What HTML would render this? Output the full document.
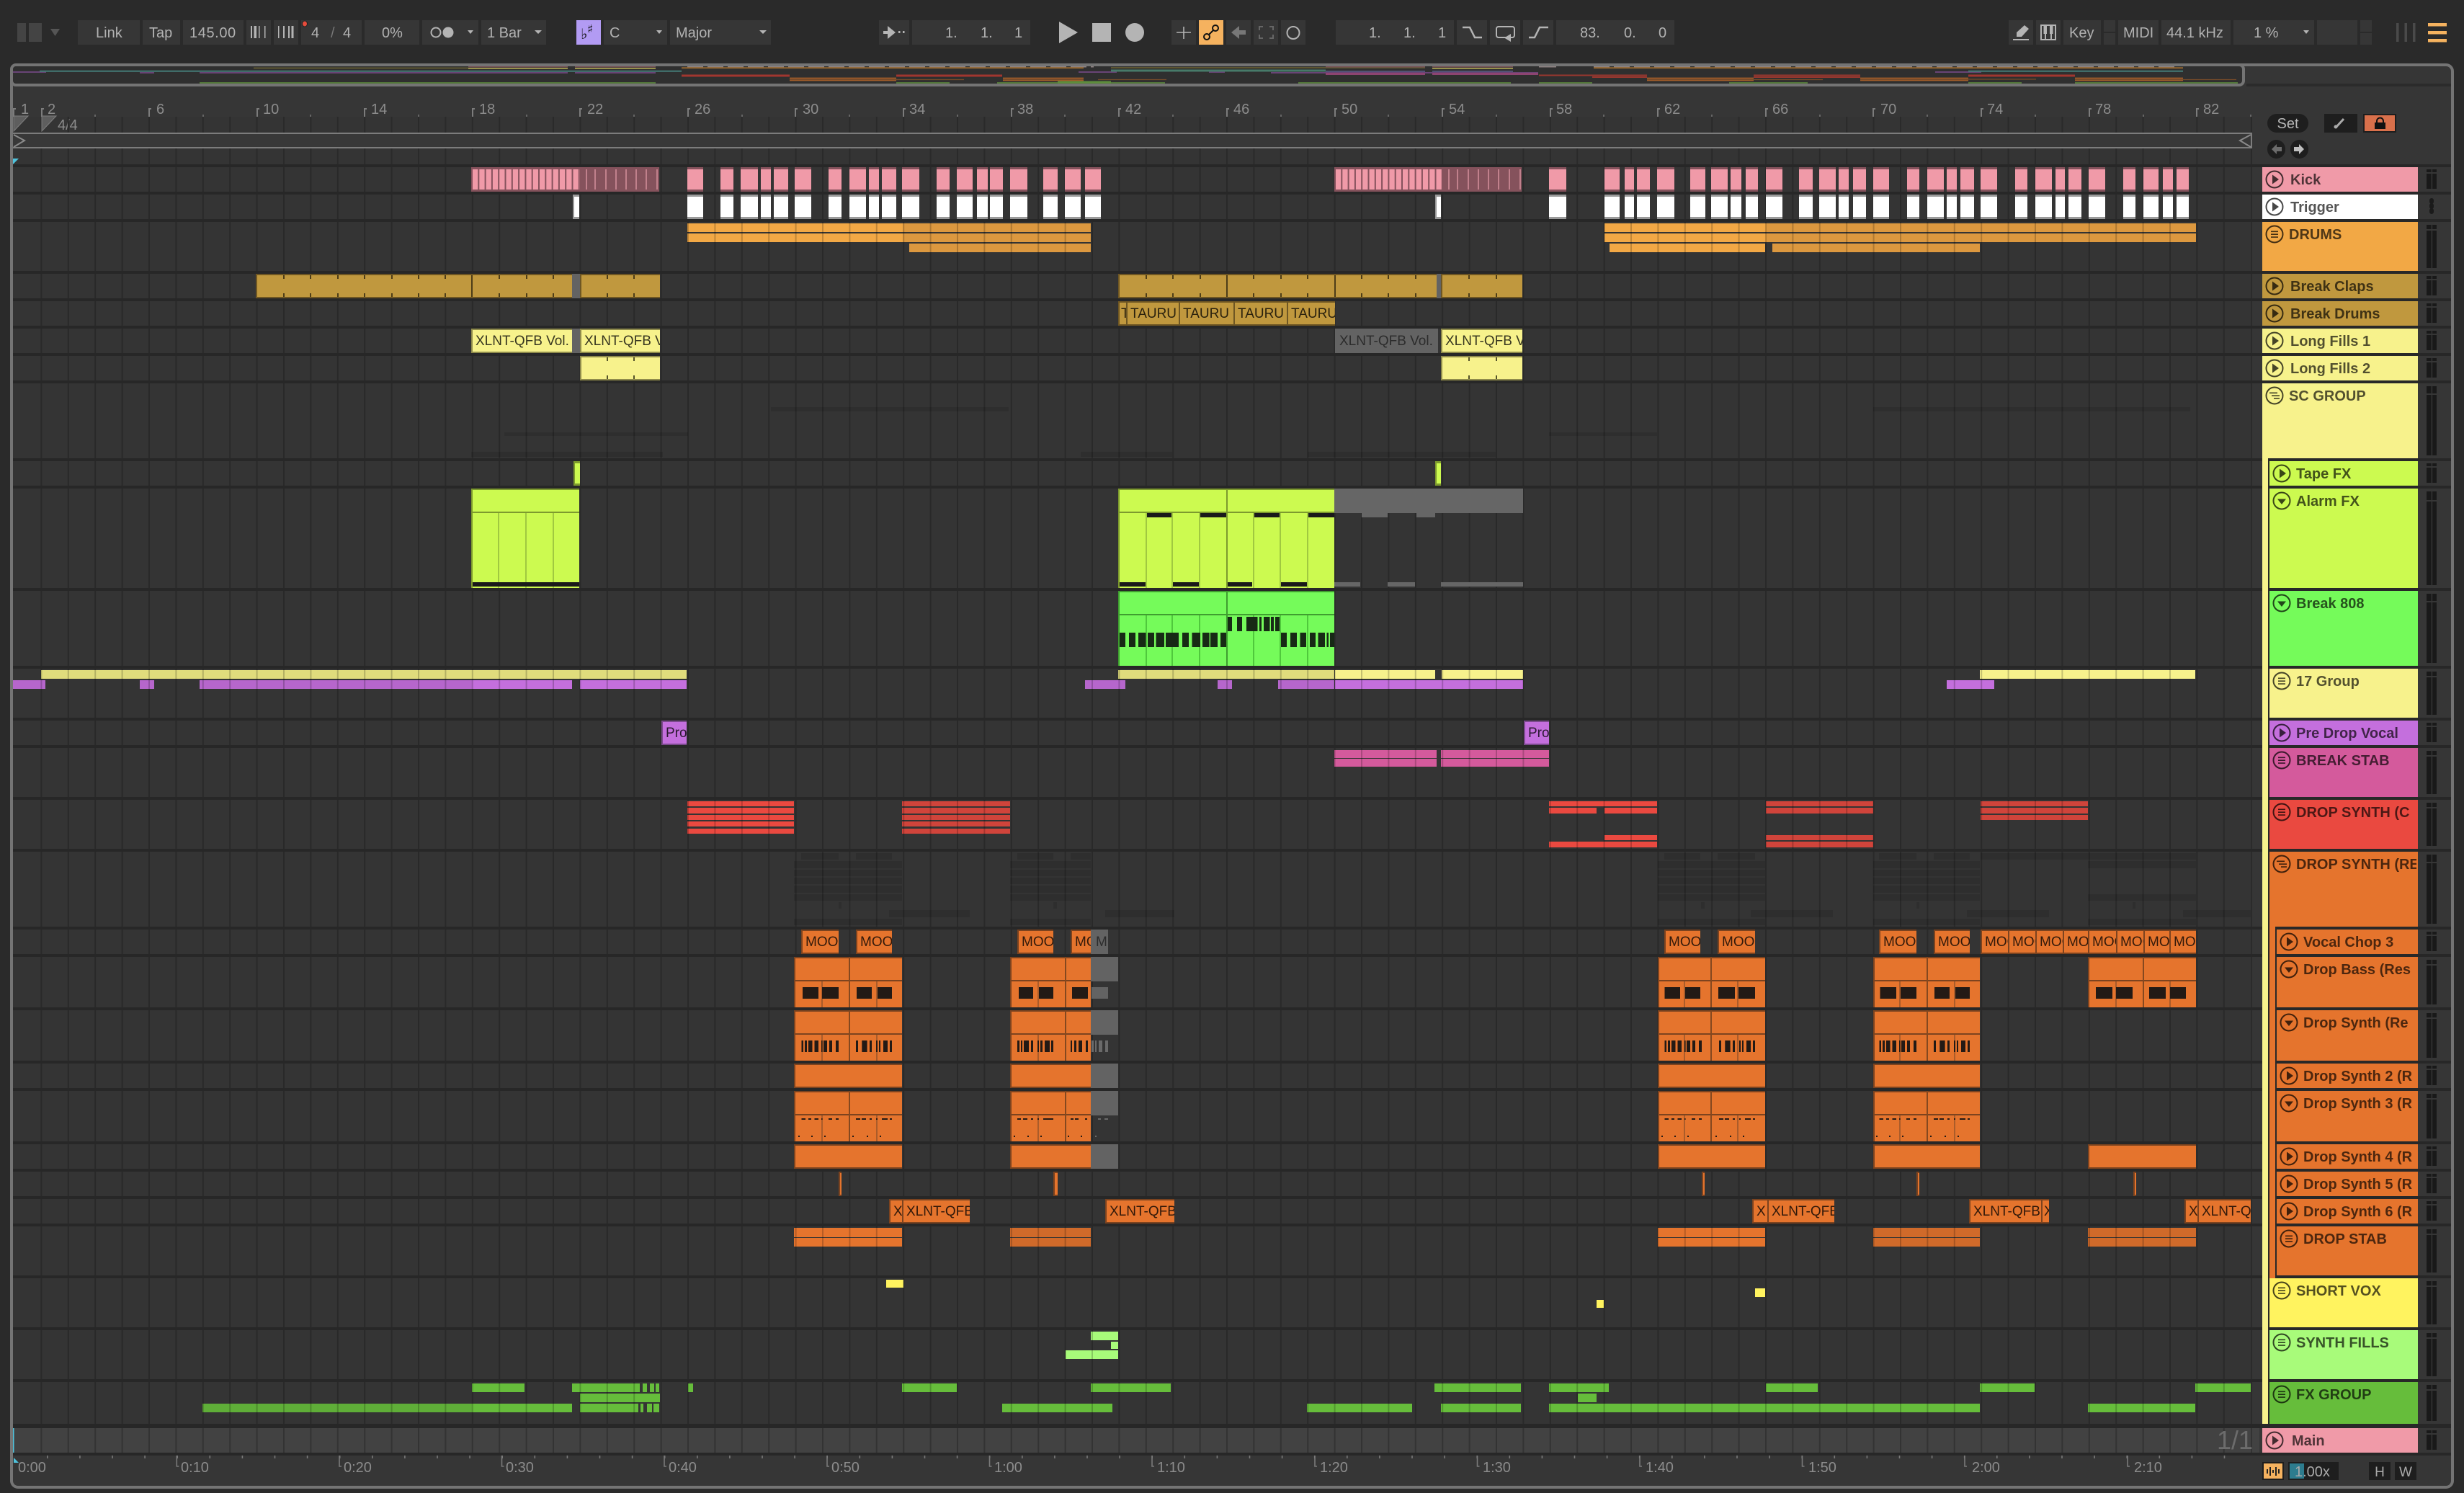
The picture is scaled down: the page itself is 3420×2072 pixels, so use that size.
<!DOCTYPE html>
<html lang="en"><head><meta charset="utf-8"><title>Arrangement</title>
<style>
html,body{margin:0;padding:0;background:#2a2a2a}
body{width:3420px;height:2072px;position:relative;overflow:hidden;font-family:"Liberation Sans",sans-serif}
svg{position:absolute;left:0;top:0}
text{font-family:"Liberation Sans",sans-serif}
.tb text{font-size:20px;fill:#b2b2b2}
.r text{font-size:20px;fill:#8c8c8c}
.st text{font-size:20px;font-weight:bold;fill:#000;fill-opacity:.67}
.c{position:absolute;box-sizing:border-box;height:34px;line-height:31px;font-size:19px;overflow:hidden;white-space:nowrap;padding-left:4px;border:2px solid;border-right:0;color:rgba(0,0,0,.78)}
.o{background:#e5742d;border-color:#7c431f}
.y{background:#f7f28c;border-color:#8f8b4c}
.a{background:#c0983e;border-color:#6e5623}
.p{background:#c46fdd;border-color:#7b4a8c}
.g{background:#636363;border-color:#636363;color:#2c2c2c}
</style></head><body>
<svg width="3420" height="2072" viewBox="0 0 3420 2072" xmlns="http://www.w3.org/2000/svg">
<defs>
<path id="L" d="M57.4 0V1M94.8 0V1M132.2 0V1M169.6 0V1M207 0V1M244.4 0V1M281.8 0V1M319.2 0V1M356.6 0V1M394 0V1M431.4 0V1M468.8 0V1M506.2 0V1M543.6 0V1M581 0V1M618.4 0V1M655.8 0V1M693.2 0V1M730.6 0V1M768 0V1M805.4 0V1M842.8 0V1M880.2 0V1M917.6 0V1M955 0V1M992.4 0V1M1029.8 0V1M1067.2 0V1M1104.6 0V1M1142 0V1M1179.4 0V1M1216.8 0V1M1254.2 0V1M1291.6 0V1M1329 0V1M1366.4 0V1M1403.8 0V1M1441.2 0V1M1478.6 0V1M1516 0V1M1553.4 0V1M1590.8 0V1M1628.2 0V1M1665.6 0V1M1703 0V1M1740.4 0V1M1777.8 0V1M1815.2 0V1M1852.6 0V1M1890 0V1M1927.4 0V1M1964.8 0V1M2002.2 0V1M2039.6 0V1M2077 0V1M2114.4 0V1M2151.8 0V1M2189.2 0V1M2226.6 0V1M2264 0V1M2301.4 0V1M2338.8 0V1M2376.2 0V1M2413.6 0V1M2451 0V1M2488.4 0V1M2525.8 0V1M2563.2 0V1M2600.6 0V1M2638 0V1M2675.4 0V1M2712.8 0V1M2750.2 0V1M2787.6 0V1M2825 0V1M2862.4 0V1M2899.8 0V1M2937.2 0V1M2974.6 0V1M3012 0V1M3049.4 0V1M3086.8 0V1M3125 0V1" stroke-width="2" fill="none"/>
<path id="B" d="M954 0H976V1H954zM1000 0H1018V1H1000zM1028 0H1052V1H1028zM1056 0H1070V1H1056zM1074 0H1094V1H1074zM1103 0H1126V1H1103zM1150 0H1168V1H1150zM1179 0H1202V1H1179zM1206 0H1220V1H1206zM1224 0H1244V1H1224zM1252 0H1276V1H1252zM1300 0H1318V1H1300zM1328 0H1350V1H1328zM1356 0H1371V1H1356zM1374 0H1392V1H1374zM1402 0H1426V1H1402zM1448 0H1468V1H1448zM1478 0H1500V1H1478zM1506 0H1528V1H1506zM2150 0H2174V1H2150zM2227 0H2248V1H2227zM2255 0H2268V1H2255zM2272 0H2290V1H2272zM2300 0H2324V1H2300zM2346 0H2367V1H2346zM2375 0H2398V1H2375zM2402 0H2417V1H2402zM2423 0H2440V1H2423zM2451 0H2474V1H2451zM2497 0H2516V1H2497zM2525 0H2548V1H2525zM2552 0H2566V1H2552zM2572 0H2590V1H2572zM2600 0H2622V1H2600zM2647 0H2664V1H2647zM2675 0H2698V1H2675zM2702 0H2716V1H2702zM2721 0H2740V1H2721zM2749 0H2772V1H2749zM2797 0H2814V1H2797zM2825 0H2848V1H2825zM2853 0H2866V1H2853zM2871 0H2889V1H2871zM2899 0H2922V1H2899zM2947 0H2964V1H2947zM2975 0H2996V1H2975zM3002 0H3016V1H3002zM3021 0H3038V1H3021z"/>
<path id="x" d="M1102 0h150v1h-150zM1402 0h112v1h-112zM2301 0h149v1h-149zM2600 0h148v1h-148z"/>
<path id="xi" d="M1104 0h148v1h-148zM1404 0h110v1h-110zM2303 0h147v1h-147zM2602 0h146v1h-146z"/>
<path id="v1" d="M1141 0v36M1217 0v36M1441 0v36M2338 0v36M2412 0v36M2637 0v36M2713 0v36" fill="none" stroke="#aa5c2a" stroke-width="2"/>
<path id="v2" d="M1179 -34v70M1479 -34v70M2375 -34v70M2675 -34v70" fill="none" stroke="#84481f" stroke-width="2"/>
<path id="bc" d="M1112.5 0h2.5v16h-2.5zM1117 0h3v16h-3zM1122 0h5.5v16h-5.5zM1130.5 0h5.5v16h-5.5zM1140 0h1.6v16h-1.6zM1143 0h5v16h-5zM1151 0h4v16h-4zM1160 0h4v16h-4zM1188 0h3v16h-3zM1196.3 0h7.3v16h-7.3zM1207 0h3v16h-3zM1216 0h2v16h-2zM1220 0h2v16h-2zM1226 0h6v16h-6zM1235 0h3v16h-3z"/>
<path id="ds" d="M1112.5 0h5.5v2h-5.5zM1122 0h4v2h-4zM1130.5 0h5.5v2h-5.5zM1140 0h1.6v2h-1.6zM1150 0h5v2h-5zM1160 0h4v2h-4zM1188 0h6v2h-6zM1196 0h6v2h-6zM1207 0h3v2h-3zM1216 0h2v2h-2zM1224 0h8v2h-8zM1235 0h3v2h-3zM1108 24h2v2h-2zM1126 24h2v2h-2zM1144 24h2v2h-2zM1183 24h2v2h-2zM1203 24h2v2h-2zM1221 24h2v2h-2z"/>
<g id="ip"><circle cx="13" cy="12" r="11.5" fill="none" stroke="#000" stroke-opacity=".72" stroke-width="2"/><path d="M10 5.5L19 12L10 18.5z"/></g>
<g id="im"><circle cx="13" cy="12" r="11.5" fill="none" stroke="#000" stroke-opacity=".72" stroke-width="2"/><path d="M8 7.5h10v1.6H8zM8 11.4h10v1.6H8zM8 15.3h10v1.6H8z"/></g>
<g id="if"><circle cx="13" cy="12" r="11.5" fill="none" stroke="#000" stroke-opacity=".72" stroke-width="2"/><path d="M6 7.5h11v1.6H6zM9 11.4h11v1.6H9zM12 15.3h8v1.6h-8z"/></g>
<g id="id"><circle cx="13" cy="12" r="11.5" fill="none" stroke="#000" stroke-opacity=".72" stroke-width="2"/><path d="M7 9.5H19L13 17z"/></g>
<clipPath id="stc"><rect x="3140" y="232" width="214" height="1790"/></clipPath>
</defs>

<!-- panel -->
<rect x="16" y="90" width="3388" height="1974" rx="9" fill="#363636" stroke="#747474" stroke-width="4"/>
<rect x="3118" y="116" width="284" height="4" fill="#2b2b2b"/>
<rect x="16" y="90" width="3098" height="28" rx="6" fill="#2f2f2f" stroke="#747474" stroke-width="4"/>

<!-- overview -->
<g fill="none" opacity=".78">
<path stroke="#7a4a8a" stroke-width="2" d="M18 100H64M194 101H214M277 101H788M798 101H910M1497 100H1550M1678 100H1700M1764 101H2135M2686 100H2750"/>
<path stroke="#4a8f8a" stroke-width="2" d="M55 98.7H946M2732 98.7H3030"/>
<path stroke="#4e8f7a" stroke-width="3" d="M1542 98H1840"/>
<path stroke="#6b6233" stroke-width="2" d="M352 94.5H650M1542 94H1840M1840 94H1978"/>
<path stroke="#b5ad55" stroke-width="2" d="M650 95H788M798 95H910M1988 95H2100"/>
<path stroke="#8a5a60" stroke-width="1.5" d="M650 92.8H788M798 92.8H910M1840 92.8H1978M1988 92.8H2100"/>
<path stroke="#a89a9a" stroke-width="1.5" stroke-dasharray="22 6" d="M954 92.7H1518M2212 92.7H3020"/>
<path stroke="#a89a9a" stroke-width="1.5" d="M2136 92.7H2160"/>
<path stroke="#b0762e" stroke-width="2" d="M946 94.2H1504M2212 94.2H3030"/>
<path stroke="#c0392f" stroke-width="3" d="M946 105H1096M1244 105H1391M2732 105H2880"/>
<path stroke="#b83a30" stroke-width="2" d="M2136 104.5H2286M2210 107H2286M2434 104.5H2582M2434 107H2582"/>
<path stroke="#c46a28" stroke-width="2" d="M1096 108.6H1244M1096 111.4H1244M1392 108.6H1504M1392 111.4H1504M2286 108.6H2434M2286 111.4H2434M2582 108.6H2732M2582 111.4H2732M2880 108.6H3030M2880 111.4H3030"/>
<path stroke="#8a5428" stroke-width="1.2" d="M1244 110.5H1338M1524 110.5H1619M2434 110.5H2530M2732 110H2826M3030 110.5H3104"/>
<path stroke="#5d8a3c" stroke-width="2" d="M277 115H910M1244 115H1318M1384 115H1617M1802 115H2097M2136 115H2210M2400 115H2509M2732 115H2806M2880 115H3106"/>
<path stroke="#6aa840" stroke-width="3" d="M1468 114H1542"/>
<path stroke="#a84a84" stroke-width="3" d="M1840 102.5H1978M1988 102.5H2135"/>
<path stroke="#6a6aa8" stroke-width="1.5" d="M1840 99H1978M1988 99H2100"/>
</g>

<!-- arrangement background -->
<rect x="18" y="162" width="3106" height="22" fill="#343434"/>
<rect x="18" y="206" width="3106" height="1770" fill="#343434"/>
<rect x="18" y="1982" width="3118" height="34" fill="#424242"/>

<!-- ruler ticks -->
<path fill="none" stroke="#7c7c7c" stroke-width="2" d="M19 162V151h3M58 162V151h3M207 162V151h3M357 162V151h3M506 162V151h3M656 162V151h3M805 162V151h3M955 162V151h3M1104 162V151h3M1254 162V151h3M1404 162V151h3M1553 162V151h3M1703 162V151h3M1853 162V151h3M2002 162V151h3M2152 162V151h3M2301 162V151h3M2451 162V151h3M2600 162V151h3M2750 162V151h3M2900 162V151h3M3049 162V151h3"/>
<path fill="none" stroke="#666" stroke-width="2" d="M132 159v3M282 159v3M431 159v3M581 159v3M731 159v3M880 159v3M1030 159v3M1179 159v3M1329 159v3M1478 159v3M1628 159v3M1778 159v3M1927 159v3M2077 159v3M2226 159v3M2376 159v3M2526 159v3M2675 159v3M2825 159v3M2975 159v3M3124 159v3"/>
<g class="r">
<text x="29" y="158">1</text><text x="66" y="158">2</text><text x="217" y="158">6</text><text x="365" y="158">10</text><text x="515" y="158">14</text><text x="665" y="158">18</text><text x="815" y="158">22</text><text x="964" y="158">26</text><text x="1114" y="158">30</text><text x="1262" y="158">34</text><text x="1412" y="158">38</text><text x="1562" y="158">42</text><text x="1712" y="158">46</text><text x="1862" y="158">50</text><text x="2011" y="158">54</text><text x="2160" y="158">58</text><text x="2310" y="158">62</text><text x="2460" y="158">66</text><text x="2610" y="158">70</text><text x="2758" y="158">74</text><text x="2908" y="158">78</text><text x="3058" y="158">82</text>
<text x="80" y="180">4/4</text>
</g>
<use href="#L" transform="translate(0,162) scale(1,22)" stroke="#2a2a2a"/>
<use href="#L" transform="translate(0,206) scale(1,22)" stroke="#2a2a2a"/>
<path d="M19 161H39L19 182zM58 161H78L58 182z" fill="#5e5e5e" stroke="#7e7e7e"/>
<!-- locator band -->
<rect x="18" y="186" width="3108" height="18" fill="#383838"/>
<path d="M18 185H3126M18 205H3126M3125 184V206" stroke="#7c7c7c" stroke-width="2" fill="none"/>
<path d="M19 187L34 195L19 204M3124 187L3109 195L3124 204" fill="none" stroke="#8a8a8a" stroke-width="2"/>
<path d="M18 220H26L18 228z" fill="#4fc3dd"/>

<!-- lane clips drawn under grid lines -->
<path fill="#f2a845" d="M954 310H1253V322H954zM954 324H1253V336H954zM2227 310H2451V322H2227zM2227 324H2451V336H2227zM2234 338H2450V350H2234z"/>
<path fill="#dc983f" d="M1253 310H1514V322H1253zM1253 324H1514V336H1253zM1262 338H1514V350H1262zM2451 310H3048V322H2451zM2451 324H3048V336H2451zM2460 338H2748V350H2460z"/>
<path fill="#e0dc7c" d="M1552 930H1852V942H1552zM57 930H953V942H57z"/>
<path fill="#f7f28c" d="M1853 930H1992V942H1853zM2001 930H2114V942H2001zM2748 930H3047V942H2748z"/>
<path fill="#b666cc" d="M18 944H63V956H18zM194 944H214V956H194zM277 944H655V956H277zM1506 944H1562V956H1506zM1690 944H1710V956H1690zM1774 944H1852V956H1774z"/>
<path fill="#c46fdd" d="M655 944H794V956H655zM805 944H953V956H805zM1853 944H2114V956H1853zM2702 944H2768V956H2702z"/>
<path fill="#d45a9c" d="M1852 1041H1994V1052H1852zM1852 1053H1994V1064H1852zM2000 1041H2150V1052H2000zM2000 1053H2150V1064H2000z"/>
<path fill="#ea4940" d="M954 1112H1102V1119H954zM954 1121H1102V1129H954zM954 1131H1102V1138H954zM954 1140H1102V1147H954zM954 1150H1102V1157H954zM2150 1112H2300V1119H2150zM2150 1121H2216V1129H2150zM2227 1121H2300V1129H2227zM2227 1159H2300V1166H2227zM2150 1168H2300V1176H2150z"/>
<path fill="#d0443b" d="M1252 1112H1402V1119H1252zM1252 1121H1402V1129H1252zM1252 1131H1402V1138H1252zM1252 1140H1402V1147H1252zM1252 1150H1402V1157H1252zM2451 1112H2600V1119H2451zM2451 1121H2600V1129H2451zM2451 1159H2600V1166H2451zM2451 1168H2600V1176H2451zM2749 1112H2898V1119H2749zM2749 1121H2898V1129H2749zM2749 1131H2898V1138H2749z"/>
<path fill="#e5742d" d="M1102 1704H1252V1717H1102zM1102 1718H1252V1730H1102zM2301 1704H2450V1717H2301zM2301 1718H2450V1730H2301z"/>
<path fill="#d06a2a" d="M1402 1704H1514V1717H1402zM1402 1718H1514V1730H1402zM2600 1704H2748V1717H2600zM2600 1718H2748V1730H2600zM2898 1704H3048V1717H2898zM2898 1718H3048V1730H2898z"/>
<path fill="#fff35f" d="M1230 1776H1254V1787H1230zM2216 1804H2226V1815H2216zM2436 1788H2450V1800H2436z"/>
<path fill="#a8fb7a" d="M1514 1848H1552V1860H1514zM1542 1862H1552V1872H1542zM1479 1874H1552V1886H1479z"/>
<path fill="#5fae38" d="M281 1948H655V1960H281z"/>
<path fill="#66bd3b" d="M655 1920H728V1932H655zM794 1920H888V1932H794zM892 1920H898V1932H892zM902 1920H908V1932H902zM910 1920H915V1932H910zM955 1920H962V1932H955zM805 1934H916V1946H805zM655 1948H794V1960H655zM805 1948H886V1960H805zM889 1948H893V1960H889zM898 1948H905V1960H898zM907 1948H915V1960H907zM1252 1920H1328V1932H1252zM1514 1920H1625V1932H1514zM1991 1920H2111V1932H1991zM2150 1920H2233V1932H2150zM2451 1920H2523V1932H2451zM2748 1920H2824V1932H2748zM3047 1920H3124V1932H3047zM2190 1934H2216V1946H2190zM1391 1948H1544V1960H1391zM1814 1948H1960V1960H1814zM2000 1948H2111V1960H2000zM2150 1948H2748V1960H2150zM2898 1948H3047V1960H2898z"/>
<!-- faint shadows -->
<g fill="#000" fill-opacity=".11">
<use href="#x" transform="translate(0,1195) scale(1,10)"/><use href="#x" transform="translate(0,1207) scale(1,9)"/><use href="#x" transform="translate(0,1218) scale(1,9)"/><use href="#x" transform="translate(0,1229) scale(1,10)"/><use href="#x" transform="translate(0,1241) scale(1,9)"/><use href="#x" transform="translate(0,1275) scale(1,9)"/>
<path d="M1112 1184H1164V1193H1112zM1188 1184H1238V1193H1188zM1412 1184H1462V1193H1412zM1486 1184H1514V1193H1486zM2310 1184H2360V1193H2310zM2384 1184H2436V1193H2384zM2608 1184H2660V1193H2608zM2684 1184H2734V1193H2684zM2749 1184H3048V1193H2749zM2898 1195H3048V1205H2898zM2898 1241H3048V1250H2898zM2898 1275H3048V1284H2898zM1234 1263H1346V1273H1234zM1534 1263H1630V1273H1534zM2430 1263H2544V1273H2430zM2730 1263H2844V1273H2730zM3030 1263H3124V1273H3030zM1164 1252H1168V1261H1164zM1462 1252H1467V1261H1462zM2361 1252H2366V1261H2361zM2660 1252H2664V1261H2660zM2960 1252H2964V1261H2960zM654 627H920V634H654zM1500 627H1627V634H1500zM1815 627H2076V634H1815zM700 600H955V605H700zM2150 600H2300V605H2150zM1070 565H1400V571H1070zM2600 565H3040V571H2600z"/>
</g>
<!-- grid lines over lanes -->
<use href="#L" transform="translate(0,232) scale(1,1744)" stroke="#000" stroke-opacity=".2"/>
<use href="#L" transform="translate(0,1982) scale(1,34)" stroke="#333"/>
<!-- meters -->
<path fill="none" stroke="#191919" stroke-width="14" d="M3375 235V239M3375 241V262M3375 312V318M3375 320V372M3375 383V387M3375 389V410M3375 421V425M3375 427V448M3375 459V463M3375 465V486M3375 497V501M3375 503V524M3375 536V546M3375 548V632M3375 643V647M3375 649V670M3375 682V694M3375 696V812M3375 824V834M3375 836V920M3375 932V938M3375 940V992M3375 1003V1007M3375 1009V1030M3375 1042V1048M3375 1050V1102M3375 1114V1120M3375 1122V1174M3375 1186V1196M3375 1198V1282M3375 1293V1297M3375 1299V1320M3375 1332V1338M3375 1340V1394M3375 1406V1412M3375 1414V1468M3375 1479V1483M3375 1485V1506M3375 1518V1524M3375 1526V1580M3375 1591V1595M3375 1597V1618M3375 1629V1633M3375 1635V1656M3375 1667V1671M3375 1673V1694M3375 1706V1712M3375 1714V1766M3375 1778V1784M3375 1786V1838M3375 1850V1856M3375 1858V1910M3375 1922V1928M3375 1930V1972M3375 1985V1989M3375 1991V2012"/>
<path fill="none" stroke="#363636" stroke-width="1.4" d="M3375.4 232V2016"/>
<path fill="none" stroke="#1a1a1a" stroke-width="6" stroke-linecap="round" stroke-dasharray="2 5" d="M3375 278V299"/>
<!-- row gaps -->
<path fill="none" stroke="#272727" stroke-width="4" d="M18 230H3402M18 268H3402M18 306H3402M18 378H3402M18 416H3402M18 454H3402M18 492H3402M18 530H3402M18 638H3402M18 676H3402M18 818H3402M18 926H3402M18 998H3402M18 1036H3402M18 1108H3402M18 1180H3402M18 1288H3402M18 1326H3402M18 1400H3402M18 1474H3402M18 1512H3402M18 1586H3402M18 1624H3402M18 1662H3402M18 1700H3402M18 1772H3402M18 1844H3402M18 1916H3402M18 2018H3402"/>
<rect x="18" y="1976" width="3384" height="6" fill="#272727"/>

<!-- Kick / Trigger -->
<use href="#B" transform="translate(0,232) scale(1,34)" fill="#85525c"/>
<use href="#B" transform="translate(0,235) scale(1,28)" fill="#f09aa8"/>
<rect x="654" y="232" width="261" height="34" fill="#85525c"/>
<rect x="1852" y="232" width="260" height="34" fill="#85525c"/>
<path fill="none" stroke="#f09aa8" stroke-width="28" stroke-dasharray="7.3 2" d="M656 249H805M1854 249H2001"/>
<path fill="none" stroke="#e9a0ad" stroke-width="1.2" d="M814 235V263M826 235V263M841 235V263M855 235V263M869 235V263M883 235V263M897 235V263M912 235V263M2011 235V263M2023 235V263M2038 235V263M2052 235V263M2066 235V263M2080 235V263M2095 235V263M2110 235V263"/>
<use href="#B" transform="translate(0,270) scale(1,34)" fill="#9a9a9a"/>
<use href="#B" transform="translate(0,273) scale(1,28)" fill="#fff"/>
<rect x="795" y="270" width="9" height="34" fill="#9a9a9a"/><rect x="797" y="273" width="7" height="28" fill="#fff"/>
<rect x="1992" y="270" width="8" height="34" fill="#9a9a9a"/><rect x="1994" y="273" width="6" height="28" fill="#fff"/>

<!-- Break Claps -->
<path fill="#6e5623" d="M355 380H794V414H355zM805 380H916V414H805zM1552 380H1994V414H1552zM2000 380H2113V414H2000z"/>
<path fill="#c0983e" d="M357 382H794V412H357zM807 382H916V412H807zM1554 382H1994V412H1554zM2002 382H2113V412H2002z"/>
<path fill="#636363" d="M794 380H805V414H794zM794 456H805V490H794zM1994 380H2000V414H1994z"/>
<path fill="none" stroke="#4d3d18" stroke-width="2" d="M394 382v5M394 407v5M431 382v5M431 407v5M469 382v5M469 407v5M506 382v5M506 407v5M544 382v5M544 407v5M581 382v5M581 407v5M618 382v5M618 407v5M655 382v30M693 382v5M693 407v5M731 382v5M731 407v5M768 382v5M768 407v5M843 382v5M843 407v5M880 382v5M880 407v5M1591 382v5M1591 407v5M1628 382v5M1628 407v5M1666 382v5M1666 407v5M1703 382v30M1740 382v5M1740 407v5M1778 382v5M1778 407v5M1815 382v5M1815 407v5M1853 382v30M1890 382v5M1890 407v5M1927 382v5M1927 407v5M1965 382v5M1965 407v5M2039 382v5M2039 407v5M2077 382v5M2077 407v5"/>
<!-- Long fills 2 -->
<path fill="#8f8b4c" d="M805 494H916V528H805zM2000 494H2113V528H2000z"/>
<path fill="#f7f28c" d="M807 496H916V526H807zM2002 496H2113V526H2002z"/>
<path fill="none" stroke="#55532a" stroke-width="2" d="M843 496v5M843 521v5M880 496v5M880 521v5M2039 496v5M2039 521v5M2077 496v5M2077 521v5"/>
<!-- Tape FX -->
<path fill="#7d9a2e" d="M796 640H805V674H796zM1992 640H2000V674H1992z"/>
<path fill="#ccfa50" d="M798 643H805V671H798zM1994 643H2000V671H1994z"/>
<!-- Alarm FX -->
<path fill="#7d9a2e" d="M654 678H804V816H654zM1552 678H1852V816H1552z"/>
<path fill="#ccfa50" d="M656 680H804V710H656zM656 712H804V816H656zM1554 680H1702V710H1554zM1704 680H1852V710H1704zM1554 712H1702V816H1554zM1704 712H1852V816H1704z"/>
<path fill="none" stroke="#a0c840" stroke-width="2" d="M692 712V816M730 712V816M768 712V816M1591 712V816M1627 712V816M1665 712V816M1740 712V816M1777 712V816M1815 712V816"/>
<path fill="#1a1a1a" d="M656 808H804V814H656zM1592 712H1626V718H1592zM1666 712H1702V718H1666zM1741 712H1776V718H1741zM1816 712H1852V718H1816zM1554 808H1590V814H1554zM1628 808H1664V814H1628zM1704 808H1738V814H1704zM1778 808H1814V814H1778z"/>
<path fill="#666" d="M1852 678H2114V712H1852zM1890 712H1926V718H1890zM1966 712H1992V718H1966zM1852 808H1888V814H1852zM1926 808H1964V814H1926zM2000 808H2114V814H2000z"/>
<!-- Break 808 -->
<rect x="1552" y="820" width="300" height="104" fill="#3f9d30"/>
<path fill="#75fb5a" d="M1554 822H1702V852H1554zM1704 822H1852V852H1704zM1554 854H1702V924H1554zM1704 854H1852V924H1704z"/>
<path fill="none" stroke="#4fc83c" stroke-width="2" d="M1591 854V924M1627 854V924M1665 854V924M1740 854V924M1777 854V924M1815 854V924"/>
<path fill="#172a15" d="M1704 856h6v20h-6zM1717 856h7v20h-7zM1730 856h15.5v20h-15.5zM1748 856h3v20h-3zM1754 856h8.5v20h-8.5zM1764 856h4v20h-4zM1770 856h6v20h-6zM1554 878h8v20h-8zM1567 878h9v20h-9zM1580 878h10.5v20h-10.5zM1593 878h9v20h-9zM1604.5 878h11.5v20h-11.5zM1618 878h18v20h-18zM1641 878h9v20h-9zM1654.5 878h11.5v20h-11.5zM1669 878h9.6v20h-9.6zM1680 878h10v20h-10zM1694 878h8v20h-8zM1778 878h8v20h-8zM1791 878h9v20h-9zM1804.5 878h8.5v20h-8.5zM1818 878h8v20h-8zM1829.5 878h9.5v20h-9.5zM1841.5 878h2.5v20h-2.5zM1846 878h6v20h-6z"/>

<!-- orange automation sections -->
<g fill="#7c431f">
<use href="#x" transform="translate(0,1328) scale(1,70)"/><use href="#x" transform="translate(0,1402) scale(1,70)"/><use href="#x" transform="translate(0,1476) scale(1,34)"/><use href="#x" transform="translate(0,1514) scale(1,70)"/><use href="#x" transform="translate(0,1588) scale(1,34)"/>
<path d="M2898 1328h150v70h-150zM2898 1588h150v34h-150z"/>
</g>
<g fill="#e5742d">
<use href="#xi" transform="translate(0,1330) scale(1,30)"/><use href="#xi" transform="translate(0,1362) scale(1,36)"/>
<use href="#xi" transform="translate(0,1404) scale(1,30)"/><use href="#xi" transform="translate(0,1436) scale(1,36)"/>
<use href="#xi" transform="translate(0,1478) scale(1,30)"/>
<use href="#xi" transform="translate(0,1516) scale(1,30)"/><use href="#xi" transform="translate(0,1548) scale(1,36)"/>
<use href="#xi" transform="translate(0,1590) scale(1,30)"/>
<path d="M2900 1330h148v30h-148zM2900 1362h148v36h-148zM2900 1590h148v30h-148z"/>
</g>
<use href="#v1" y="1362"/><use href="#v2" y="1362"/><use href="#v1" y="1436"/><use href="#v2" y="1436"/><use href="#v1" y="1548"/><use href="#v2" y="1548"/>
<path fill="none" stroke="#aa5c2a" stroke-width="2" d="M2937 1362v36M3012 1362v36"/><path fill="none" stroke="#84481f" stroke-width="2" d="M2975 1328v70"/>
<path fill="#231a15" d="M1114 1370h22v16h-22zM1141 1370h23v16h-23zM1189 1370h21v16h-21zM1218 1370h20v16h-20zM1414 1370h20v16h-20zM1442 1370h20v16h-20zM1488 1370h22v16h-22zM2310.5 1370h21.5v16h-21.5zM2339 1370h21v16h-21zM2385 1370h23v16h-23zM2413 1370h23v16h-23zM2609.5 1370h22.5v16h-22.5zM2638 1370h22v16h-22zM2685 1370h21v16h-21zM2714 1370h20v16h-20zM2909 1370h23v16h-23zM2937 1370h23v16h-23zM2983 1370h23v16h-23zM3012 1370h22v16h-22z"/>
<g fill="#231a15">
<use href="#bc" y="1444"/><use href="#bc" transform="translate(1198,1444)"/><use href="#bc" transform="translate(1496,1444)"/>
<path d="M1412 1444h3v16h-3zM1417 1444h2v16h-2zM1421 1444h7v16h-7zM1431 1444h3v16h-3zM1440 1444h2v16h-2zM1444 1444h3v16h-3zM1450 1444h7v16h-7zM1459 1444h3v16h-3zM1486 1444h2v16h-2zM1491 1444h3v16h-3zM1497 1444h5v16h-5zM1507 1444h3v16h-3z"/>
<use href="#ds" y="1552"/><use href="#ds" transform="translate(1198,1552)"/><use href="#ds" transform="translate(1496,1552)"/>
<path d="M1412 1552h5v2h-5zM1420 1552h6v2h-6zM1431 1552h3v2h-3zM1440 1552h2v2h-2zM1448 1552h14v2h-14zM1486 1552h4v2h-4zM1492 1552h5v2h-5zM1506 1552h3v2h-3zM1407 1576h2v2h-2zM1426 1576h2v2h-2zM1444 1576h2v2h-2zM1482 1576h2v2h-2zM1500 1576h2v2h-2z"/>
</g>
<!-- grey deactivated end -->
<path fill="#636363" d="M1514 1328H1552V1362H1514zM1515 1370H1538V1386H1515zM1514 1402H1552V1436H1514zM1514 1476H1552V1510H1514zM1514 1514H1552V1548H1514zM1514 1588H1552V1622H1514z"/>
<path fill="#6a6a6a" d="M1515 1444h3v16h-3zM1520 1444h2v16h-2zM1525 1444h5v16h-5zM1534 1444h4v16h-4zM1524 1552h4v2h-4zM1533 1552h5v2h-5zM1520 1576h2v2h-2z"/>
<!-- drop synth 5 -->
<path fill="#7c431f" d="M1164 1626h4v34h-4zM1462 1626h6v34h-6zM2362 1626h4v34h-4zM2660 1626h4v34h-4zM2961 1626h4v34h-4z"/>
<path fill="#e5742d" d="M1166 1628h2v30h-2zM1464 1628h4v30h-4zM2364 1628h2v30h-2zM2662 1628h2v30h-2zM2963 1628h2v30h-2z"/>

<!-- main-lane cursor -->
<rect x="18" y="1982" width="1.5" height="34" fill="#4fc3dd"/>
<text x="3077" y="2011" font-size="36" fill="#6c6c6c">1/1</text>

<!-- time ruler -->
<path fill="none" stroke="#7a7a7a" stroke-width="4" stroke-dasharray="1.6 43.5" d="M65 2022H3124"/>
<path fill="none" stroke="#7a7a7a" stroke-width="1.6" d="M245.3 2020V2035h3M471 2020V2035h3M696.5 2020V2035h3M922 2020V2035h3M1148 2020V2035h3M1373.5 2020V2035h3M1599 2020V2035h3M1825 2020V2035h3M2050.5 2020V2035h3M2276 2020V2035h3M2501.5 2020V2035h3M2727 2020V2035h3M2953 2020V2035h3"/>
<g class="r">
<text x="25" y="2043">0:00</text><text x="251" y="2043">0:10</text><text x="477" y="2043">0:20</text><text x="702" y="2043">0:30</text><text x="928" y="2043">0:40</text><text x="1154" y="2043">0:50</text><text x="1380" y="2043">1:00</text><text x="1606" y="2043">1:10</text><text x="1832" y="2043">1:20</text><text x="2058" y="2043">1:30</text><text x="2284" y="2043">1:40</text><text x="2510" y="2043">1:50</text><text x="2737" y="2043">2:00</text><text x="2962" y="2043">2:10</text>
</g>
<path d="M19 2023L26 2030H19z" fill="#4fc3dd"/>

<!-- strips -->
<rect x="3140" y="232" width="216" height="1784" fill="#282828"/>
<g fill="#f7f28c"><rect x="3140" y="532" width="8" height="1444"/></g>
<rect x="3150" y="1286" width="8" height="488" fill="#e5742d"/>
<g>
<rect x="3140" y="232" width="216" height="34" fill="#f09aa8"/><rect x="3140" y="270" width="216" height="34" fill="#fff"/><rect x="3140" y="308" width="216" height="68" fill="#f2a845"/><rect x="3140" y="380" width="216" height="34" fill="#c0983e"/><rect x="3140" y="418" width="216" height="34" fill="#c0983e"/><rect x="3140" y="456" width="216" height="34" fill="#f7f28c"/><rect x="3140" y="494" width="216" height="34" fill="#f7f28c"/><rect x="3140" y="532" width="216" height="104" fill="#f7f28c"/>
<rect x="3150" y="640" width="206" height="34" fill="#ccfa50"/><rect x="3150" y="678" width="206" height="138" fill="#ccfa50"/><rect x="3150" y="820" width="206" height="104" fill="#75fb5a"/><rect x="3150" y="928" width="206" height="68" fill="#f7f28c"/><rect x="3150" y="1000" width="206" height="34" fill="#c46fdd"/><rect x="3150" y="1038" width="206" height="68" fill="#d45a9c"/><rect x="3150" y="1110" width="206" height="68" fill="#ea4940"/><rect x="3150" y="1182" width="206" height="104" fill="#e5742d"/>
<g fill="#e5742d"><rect x="3160" y="1290" width="196" height="34"/><rect x="3160" y="1328" width="196" height="70"/><rect x="3160" y="1402" width="196" height="70"/><rect x="3160" y="1476" width="196" height="34"/><rect x="3160" y="1514" width="196" height="70"/><rect x="3160" y="1588" width="196" height="34"/><rect x="3160" y="1626" width="196" height="34"/><rect x="3160" y="1664" width="196" height="34"/><rect x="3160" y="1702" width="196" height="68"/></g>
<rect x="3150" y="1774" width="206" height="68" fill="#fff35f"/><rect x="3150" y="1846" width="206" height="68" fill="#a8fb7a"/><rect x="3150" y="1918" width="206" height="58" fill="#66bd3b"/><rect x="3140" y="1982" width="216" height="34" fill="#f09aa8"/>
</g>
<g fill="#000" fill-opacity=".72">
<use href="#ip" x="3144" y="237"/><use href="#ip" x="3144" y="275"/><use href="#im" x="3144" y="313"/><use href="#ip" x="3144" y="385"/><use href="#ip" x="3144" y="423"/><use href="#ip" x="3144" y="461"/><use href="#ip" x="3144" y="499"/><use href="#if" x="3144" y="537"/>
<use href="#ip" x="3154" y="645"/><use href="#id" x="3154" y="683"/><use href="#id" x="3154" y="825"/><use href="#im" x="3154" y="933"/><use href="#ip" x="3154" y="1005"/><use href="#im" x="3154" y="1043"/><use href="#im" x="3154" y="1115"/><use href="#if" x="3154" y="1187"/>
<use href="#ip" x="3164" y="1295"/><use href="#id" x="3164" y="1333"/><use href="#id" x="3164" y="1407"/><use href="#ip" x="3164" y="1481"/><use href="#id" x="3164" y="1519"/><use href="#ip" x="3164" y="1593"/><use href="#ip" x="3164" y="1631"/><use href="#ip" x="3164" y="1669"/><use href="#im" x="3164" y="1707"/>
<use href="#im" x="3154" y="1779"/><use href="#im" x="3154" y="1851"/><use href="#im" x="3154" y="1923"/><use href="#ip" x="3144" y="1987"/>
</g>
<g class="st" clip-path="url(#stc)">
<text x="3179" y="256">Kick</text><text x="3179" y="294">Trigger</text><text x="3177" y="332">DRUMS</text><text x="3179" y="404">Break Claps</text><text x="3179" y="442">Break Drums</text><text x="3179" y="480">Long Fills 1</text><text x="3179" y="518">Long Fills 2</text><text x="3177" y="556">SC GROUP</text>
<text x="3187" y="664">Tape FX</text><text x="3187" y="702">Alarm FX</text><text x="3187" y="844">Break 808</text><text x="3187" y="952">17 Group</text><text x="3187" y="1024">Pre Drop Vocal</text><text x="3187" y="1062">BREAK STAB</text><text x="3187" y="1134">DROP SYNTH (C</text><text x="3187" y="1206">DROP SYNTH (RE</text>
<text x="3197" y="1314">Vocal Chop 3</text><text x="3197" y="1352">Drop Bass (Res</text><text x="3197" y="1426">Drop Synth (Re</text><text x="3197" y="1500">Drop Synth 2 (R</text><text x="3197" y="1538">Drop Synth 3 (R</text><text x="3197" y="1612">Drop Synth 4 (R</text><text x="3197" y="1650">Drop Synth 5 (R</text><text x="3197" y="1688">Drop Synth 6 (R</text><text x="3197" y="1726">DROP STAB</text>
<text x="3187" y="1798">SHORT VOX</text><text x="3187" y="1870">SYNTH FILLS</text><text x="3187" y="1942">FX GROUP</text><text x="3181" y="2006">Main</text>
</g>

<!-- header right buttons -->
<rect x="3147" y="158" width="57" height="26" rx="13" fill="#1e1e1e"/><text x="3175.5" y="178" text-anchor="middle" font-size="20" fill="#b8b8b8">Set</text>
<rect x="3226" y="158" width="46" height="26" fill="#1e1e1e"/><path d="M3242 177L3253 165" stroke="#aaa" stroke-width="3" fill="none"/><circle cx="3242" cy="176" r="2.5" fill="#aaa"/>
<rect x="3280" y="158" width="46" height="26" fill="#1e1e1e"/><rect x="3282" y="160" width="42" height="22" fill="#d9704b"/><rect x="3296" y="170" width="15" height="9" fill="#111"/><path d="M3299 170V168a4.5 4.5 0 0 1 9 0V170" fill="none" stroke="#111" stroke-width="2"/>
<rect x="3147" y="194" width="25" height="26" rx="12.5" fill="#1e1e1e"/><rect x="3179" y="194" width="25" height="26" rx="12.5" fill="#1e1e1e"/>
<path d="M3153 207L3160 200V204H3167V210H3160V214z" fill="#6c6c6c"/><path d="M3198 207L3191 200V204H3184V210H3191V214z" fill="#c0c0c0"/>

<!-- bottom right -->
<rect x="3140" y="2029" width="30" height="25" fill="#1e1e1e"/><rect x="3142" y="2031" width="26" height="21" fill="#f5b25f"/>
<path d="M3147 2039v6M3151 2036v12M3155 2040v4M3159 2036v12M3163 2039v6" stroke="#222" stroke-width="2" fill="none"/>
<rect x="3176" y="2029" width="70" height="25" fill="#1e1e1e"/><rect x="3178" y="2031" width="20" height="21" fill="#2d7c8e"/><text x="3185" y="2049" font-size="20" fill="#aaa">1.00x</text>
<rect x="3288" y="2029" width="30" height="25" fill="#1e1e1e"/><text x="3303" y="2049" text-anchor="middle" font-size="19" fill="#aaa">H</text>
<rect x="3324" y="2029" width="30" height="25" fill="#1e1e1e"/><text x="3339" y="2049" text-anchor="middle" font-size="19" fill="#aaa">W</text>

<!-- toolbar -->
<path fill="#444" d="M24 32h12v26H24zM40 32h18v26H40z"/><path fill="#555" d="M70 40h13l-6.5 10z"/>
<g fill="#363636">
<rect x="108" y="28" width="86" height="34"/><rect x="198" y="28" width="52" height="34"/><rect x="254" y="28" width="84" height="34"/><rect x="342" y="28" width="34" height="34"/><rect x="380" y="28" width="34" height="34"/><rect x="418" y="28" width="84" height="34"/><rect x="506" y="28" width="76" height="34"/><rect x="586" y="28" width="78" height="34"/><rect x="668" y="28" width="90" height="34"/><rect x="838" y="28" width="88" height="34"/><rect x="930" y="28" width="140" height="34"/>
<rect x="1220" y="28" width="42" height="34"/><rect x="1266" y="28" width="164" height="34"/><rect x="1626" y="28" width="34" height="34"/><rect x="1702" y="28" width="34" height="34"/><rect x="1740" y="28" width="34" height="34"/><rect x="1778" y="28" width="34" height="34"/><rect x="1854" y="28" width="164" height="34"/><rect x="2022" y="28" width="42" height="34"/><rect x="2068" y="28" width="42" height="34"/><rect x="2114" y="28" width="42" height="34"/><rect x="2160" y="28" width="164" height="34"/>
<rect x="2788" y="28" width="34" height="34"/><rect x="2826" y="28" width="34" height="34"/><rect x="2864" y="28" width="52" height="34"/><rect x="2920" y="28" width="16" height="16"/><rect x="2920" y="46" width="16" height="16"/><rect x="2940" y="28" width="56" height="34"/><rect x="3000" y="28" width="96" height="34"/><rect x="3100" y="28" width="112" height="34"/><rect x="3216" y="28" width="56" height="34"/><rect x="3276" y="28" width="16" height="16"/><rect x="3276" y="46" width="16" height="16"/>
</g>
<g class="tb">
<text x="133" y="52">Link</text><text x="207" y="52">Tap</text><text x="263" y="52" style="letter-spacing:.6px">145.00</text>
<text x="432" y="52">4</text><text x="459" y="52" style="fill:#777" font-size="18">/</text><text x="476" y="52">4</text><text x="530" y="52">0%</text><text x="676" y="52">1 Bar</text>
<text x="846" y="52">C</text><text x="938" y="52">Major</text>
<text x="1312" y="52">1.</text><text x="1361" y="52">1.</text><text x="1408" y="52">1</text>
<text x="1900" y="52">1.</text><text x="1948" y="52">1.</text><text x="1996" y="52">1</text>
<text x="2193" y="52">83.</text><text x="2254" y="52">0.</text><text x="2302" y="52">0</text>
<text x="2872" y="52">Key</text><text x="2947" y="52">MIDI</text><text x="3007" y="52">44.1 kHz</text><text x="3128" y="52">1 %</text>
</g>
<path fill="#b4b4b4" d="M348 36h2v17h-2zM352.5 36h3.5v17h-3.5zM359 36h1.5v17H359zM367 36h1.5v17H367zM386 36h1.5v17H386zM393 36h2v17h-2zM400 36h2v17h-2zM404.5 36h3v17h-3z"/>
<ellipse cx="423" cy="33" rx="3.5" ry="4" fill="#e74c3c" stroke="#222"/>
<circle cx="605" cy="45" r="6.5" fill="none" stroke="#b4b4b4" stroke-width="2"/><circle cx="622" cy="45" r="7.5" fill="#b4b4b4"/>
<path fill="#b4b4b4" d="M649 42h8l-4 5zM742 42h10l-5 5zM911 42h8l-4 5zM1054 42h10l-5 5zM3197 42h8l-4 5z"/>
<rect x="800" y="28" width="34" height="34" fill="#b29bf3"/>
<text x="806" y="54" font-size="20" fill="#111" style="font-family:'DejaVu Sans',sans-serif">♭</text><text x="815" y="46" font-size="17" font-weight="bold" fill="#111" style="font-family:'DejaVu Sans',sans-serif">♯</text>
<path fill="#b4b4b4" d="M1226 43h6v-7l11 9-11 9v-7h-6zM1247 43h2.5v3H1247zM1253 43h2.5v3H1253z"/>
<path fill="#b4b4b4" d="M1470 30L1496 45L1470 60zM1516 32h26v26h-26z"/><circle cx="1575" cy="45" r="13" fill="#b4b4b4"/>
<path d="M1643 37V54M1633 45H1653" stroke="#b4b4b4" stroke-width="1.6" fill="none"/>
<rect x="1664" y="28" width="34" height="34" fill="#f5b25f"/>
<circle cx="1675" cy="51" r="4" fill="none" stroke="#111" stroke-width="2"/><circle cx="1687" cy="39" r="4" fill="none" stroke="#111" stroke-width="2"/><path d="M1678 48L1684 42" stroke="#111" stroke-width="2"/>
<path fill="#777" d="M1709 45L1720 36V42H1729V48H1720V54z"/>
<path d="M1748 42V37h5M1762 37h5v5M1767 48v5h-5M1753 53h-5v-5" stroke="#666" stroke-width="2" fill="none"/>
<circle cx="1795" cy="45.5" r="8.5" fill="none" stroke="#b4b4b4" stroke-width="2"/>
<path d="M2030 38H2040L2047 52H2057" stroke="#b4b4b4" stroke-width="2.5" fill="none"/>
<path d="M2092 52H2080a3 3 0 0 1-3-3V40a3 3 0 0 1 3-3H2099a3 3 0 0 1 3 3V49a3 3 0 0 1-3 3H2096" stroke="#b4b4b4" stroke-width="2" fill="none"/><path d="M2097 47V58L2088 52.5z" fill="#b4b4b4"/>
<path d="M2122 52H2130L2137 38H2149" stroke="#b4b4b4" stroke-width="2.5" fill="none"/>
<path fill="#b4b4b4" d="M2810 35L2816 40L2806 51H2799V45zM2794 54h22v2h-22z"/>
<path fill="#b4b4b4" d="M2832 34h22v22h-22zM2834 36v18h4V47h-1.5V36zM2840 47v7h6v-7h-1V36h-4v11zM2848 47v7h4V36h-2.5v11z"/>
<path fill="#4a4a4a" d="M3326 32h3.5v26H3326zM3337.5 32h3.5v26h-3.5zM3349 32h3.5v26H3349z"/>
<path fill="#f5b25f" d="M3370 32h26v4.5h-26zM3370 43h26v4.5h-26zM3370 54h26v4.5h-26z"/>
</svg>

<!-- clips with text -->
<div class="c a" style="left:1552px;top:418px;width:11px;padding-left:2px">T</div>
<div class="c a" style="left:1563px;top:418px;width:73px">TAURU</div>
<div class="c a" style="left:1636px;top:418px;width:76px">TAURU</div>
<div class="c a" style="left:1712px;top:418px;width:74px">TAURU</div>
<div class="c a" style="left:1786px;top:418px;width:67px">TAURU</div>
<div class="c y" style="left:654px;top:456px;width:140px">XLNT-QFB Vol. X</div>
<div class="c y" style="left:805px;top:456px;width:111px">XLNT-QFB Vol.</div>
<div class="c g" style="left:1853px;top:456px;width:143px">XLNT-QFB Vol.</div>
<div class="c y" style="left:2000px;top:456px;width:113px">XLNT-QFB Vol.</div>
<div class="c p" style="left:918px;top:1000px;width:35px">Pro</div>
<div class="c p" style="left:2115px;top:1000px;width:35px">Pro</div>

<div class="c o" style="left:1112px;top:1290px;width:52px">MOOG</div>
<div class="c o" style="left:1188px;top:1290px;width:50px">MOOG</div>
<div class="c o" style="left:1412px;top:1290px;width:50px">MOOG</div>
<div class="c o" style="left:1486px;top:1290px;width:28px">MOOG</div>
<div class="c g" style="left:1514px;top:1290px;width:24px;padding-left:5px">M</div>
<div class="c o" style="left:2310px;top:1290px;width:50px">MOOG</div>
<div class="c o" style="left:2384px;top:1290px;width:52px">MOOG</div>
<div class="c o" style="left:2608px;top:1290px;width:52px">MOOG</div>
<div class="c o" style="left:2684px;top:1290px;width:50px">MOOG</div>
<div class="c o" style="left:2749px;top:1290px;width:38px">MOOG</div>
<div class="c o" style="left:2787px;top:1290px;width:38px">MOOG</div>
<div class="c o" style="left:2825px;top:1290px;width:38px">MOOG</div>
<div class="c o" style="left:2863px;top:1290px;width:35px">MOOG</div>
<div class="c o" style="left:2898px;top:1290px;width:39px">MOOG</div>
<div class="c o" style="left:2937px;top:1290px;width:38px">MOOG</div>
<div class="c o" style="left:2975px;top:1290px;width:36px">MOOG</div>
<div class="c o" style="left:3011px;top:1290px;width:37px">MOOG</div>

<div class="c o" style="left:1234px;top:1664px;width:18px">X</div>
<div class="c o" style="left:1252px;top:1664px;width:94px">XLNT-QFB</div>
<div class="c o" style="left:1534px;top:1664px;width:96px">XLNT-QFB</div>
<div class="c o" style="left:2432px;top:1664px;width:21px">X</div>
<div class="c o" style="left:2453px;top:1664px;width:93px">XLNT-QFB</div>
<div class="c o" style="left:2733px;top:1664px;width:100px">XLNT-QFB</div>
<div class="c o" style="left:2833px;top:1664px;width:11px;padding-left:2px">X</div>
<div class="c o" style="left:3032px;top:1664px;width:18px">X</div>
<div class="c o" style="left:3050px;top:1664px;width:74px">XLNT-QFB</div>
</body></html>
